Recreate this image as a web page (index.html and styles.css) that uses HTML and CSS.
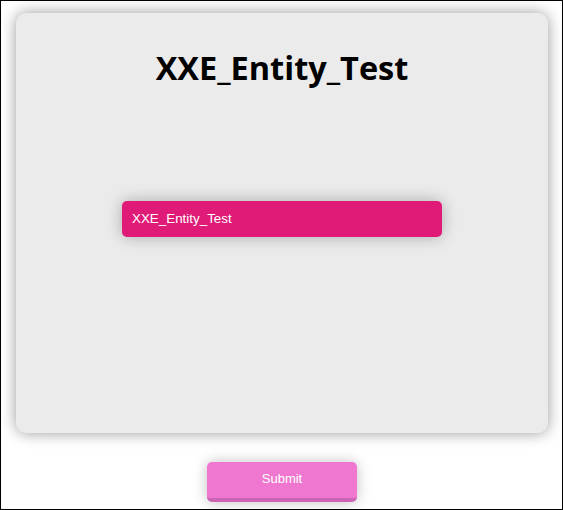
FILE: index.html
```html
<!DOCTYPE html>
<html>
<head>
<meta charset="utf-8">
<link rel="stylesheet" href="styles.css">
</head>
<body>
<div class="frame">
  <div class="card">
    <h1 class="title">XXE_Entity_Test</h1>
    <div class="field">XXE_Entity_Test</div>
  </div>
  <button class="submit">Submit</button>
</div>
</body>
</html>
```
FILE: styles.css
```css
html, body {
  margin: 0;
  padding: 0;
  background: #fff;
}
.frame {
  box-sizing: border-box;
  width: 563px;
  height: 510px;
  border: 1px solid #000;
  display: flex;
  flex-direction: column;
  align-items: center;
  overflow: hidden;
}
.card {
  box-sizing: border-box;
  width: 532px;
  height: 420px;
  margin: 12px 0 0 1px;
  background: #ebebeb;
  border-radius: 10px;
  box-shadow: 0 0 15px rgba(0, 0, 0, 0.4);
  display: flex;
  flex-direction: column;
  align-items: center;
  padding-top: 35px;
}
.title {
  margin: 0;
  font-family: "Open Sans", sans-serif;
  font-weight: 700;
  font-size: 32.5px;
  line-height: 40px;
  color: #000;
}
.field {
  box-sizing: border-box;
  width: 320px;
  height: 36px;
  margin-top: 113px;
  background: #e01a77;
  border-radius: 5px;
  box-shadow: 0 0 16px rgba(0, 0, 0, 0.28);
  color: #fff;
  font-family: "Liberation Sans", Arial, sans-serif;
  font-size: 13.4px;
  line-height: 36px;
  padding-left: 10px;
}
.submit {
  box-sizing: border-box;
  width: 150px;
  height: 40px;
  margin: 29px 0 0 1px;
  background: #ef77d0;
  border: none;
  border-bottom: 4px solid #cc64b4;
  border-radius: 5px;
  box-shadow: 0 0 14px rgba(0, 0, 0, 0.25);
  color: #fff;
  font-family: "Liberation Sans", Arial, sans-serif;
  font-size: 13px;
  padding: 0 0 3px 0;
}
```
